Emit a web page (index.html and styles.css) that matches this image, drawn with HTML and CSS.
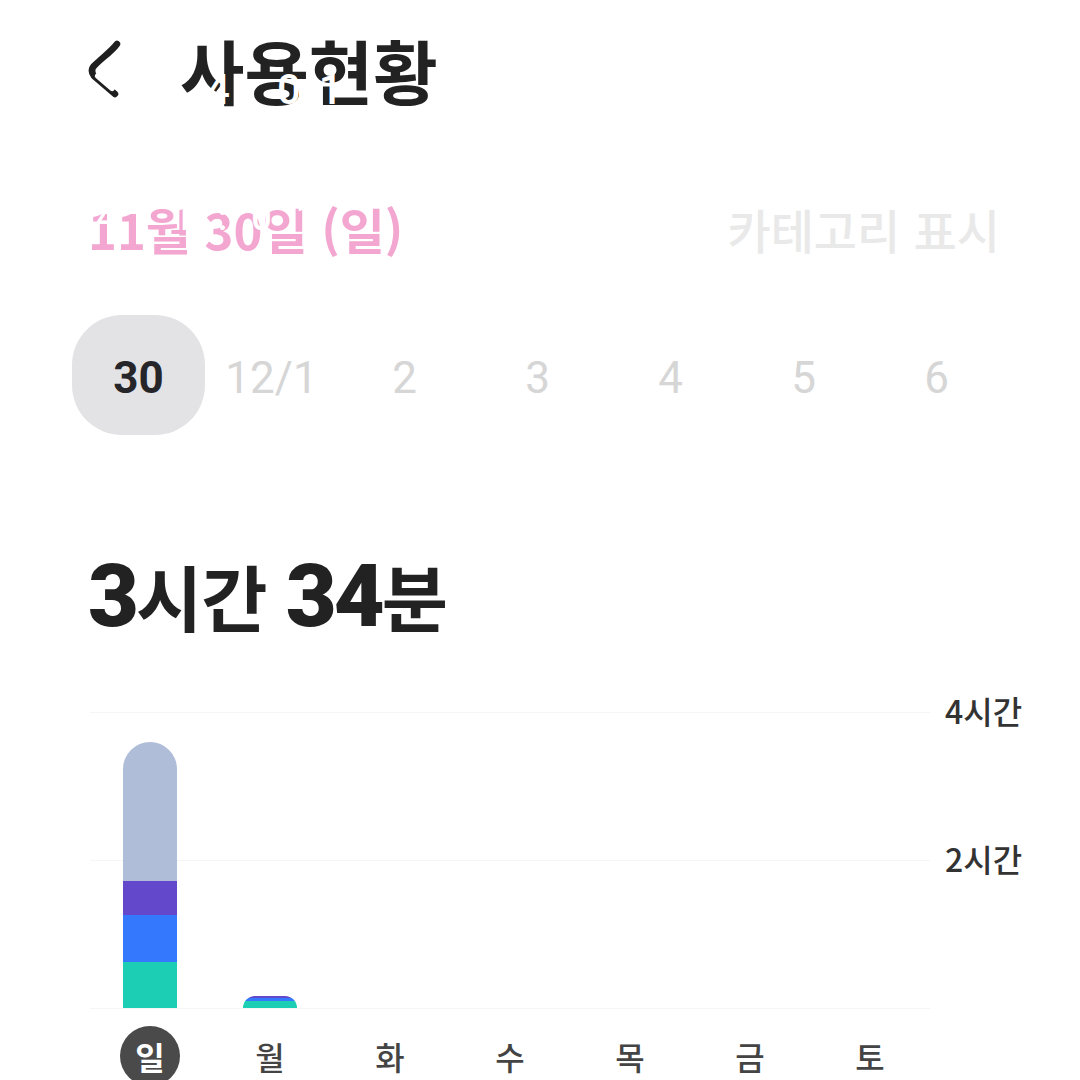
FILE: index.html
```html
<!DOCTYPE html>
<html lang="ko">
<head>
  <meta charset="UTF-8">
  <title>사용현황</title>
  <link rel="stylesheet" href="styles.css">
</head>
<body>
  <div class="screen">
    <header class="top-bar">
      <svg class="back-icon" width="40" height="64" viewBox="0 0 40 64" aria-hidden="true">
        <path d="M29 6 C24 13 14 20 8 26 C3 30 3 34 6 38 L27 56" fill="none" stroke="#1f1f1f" stroke-width="6.5" stroke-linecap="round" stroke-linejoin="round"/>
        <path d="M10 38 L24 50" fill="none" stroke="#fff" stroke-width="6" stroke-linecap="round"/>
      </svg>
      <h1>사용현황</h1>
      <span class="status-time">4:01</span>
    </header>

    <div class="date-row">
      <span class="date">11월 30일 (일)<span class="date-mask">4 1:01</span></span>
      <span class="category">카테고리 표시</span>
    </div>

    <div class="day-strip">
      <div class="day active">30</div>
      <div class="day">12/1</div>
      <div class="day">2</div>
      <div class="day">3</div>
      <div class="day">4</div>
      <div class="day">5</div>
      <div class="day">6</div>
    </div>

    <div class="total">
      <b>3</b>시간 <b>34</b>분
    </div>

    <div class="chart">
      <div class="grid-row"><div class="line"></div><span class="tick">4시간</span></div>
      <div class="grid-row"><div class="line"></div><span class="tick">2시간</span></div>
      <div class="grid-row"><div class="line"></div></div>

      <div class="bars">
        <div class="bar-slot">
          <div class="bar">
            <div class="seg seg-other" style="height:139px"></div>
            <div class="seg seg-purple" style="height:34px"></div>
            <div class="seg seg-blue" style="height:47px"></div>
            <div class="seg seg-green" style="height:46px"></div>
          </div>
        </div>
        <div class="bar-slot">
          <div class="bar bar-small">
            <div class="seg seg-purple" style="height:2px"></div>
            <div class="seg seg-blue" style="height:3px"></div>
            <div class="seg seg-green" style="height:7px"></div>
          </div>
        </div>
        <div class="bar-slot"></div>
        <div class="bar-slot"></div>
        <div class="bar-slot"></div>
        <div class="bar-slot"></div>
        <div class="bar-slot"></div>
      </div>

      <div class="weekdays">
        <div class="weekday"><span class="today">일</span></div>
        <div class="weekday">월</div>
        <div class="weekday">화</div>
        <div class="weekday">수</div>
        <div class="weekday">목</div>
        <div class="weekday">금</div>
        <div class="weekday">토</div>
      </div>
    </div>
  </div>
</body>
</html>
```

FILE: styles.css
```css
* {
  box-sizing: border-box;
}
html, body {
  margin: 0;
  height: 100%;
  overflow: hidden;
  background: #fff;
}
body {
  font-family: "Noto Sans CJK KR", "Roboto", sans-serif;
  color: #222;
}
.screen {
  height: 1080px;
  padding: 30px 0 0 88px;
  overflow: hidden;
}

/* Header */
.top-bar {
  position: relative;
  display: flex;
  align-items: center;
  height: 80px;
}
.back-icon {
  margin-left: 0;
  margin-right: 52px;
  flex: none;
}
.top-bar h1 {
  margin: 0;
  font-size: 70px;
  line-height: 80px;
  font-weight: 700;
  letter-spacing: 0;
  color: #222;
}
.status-time {
  position: absolute;
  left: 118px;
  top: 36px;
  font-family: "Roboto", sans-serif;
  font-size: 42px;
  line-height: 48px;
  font-weight: 500;
  letter-spacing: 18px;
  color: #fff;
}

/* Date row */
.date-row {
  display: flex;
  justify-content: space-between;
  align-items: center;
  margin-top: 88px;
  padding-right: 80px;
  height: 60px;
}
.date {
  position: relative;
  font-size: 49px;
  font-weight: 700;
  color: #f2a6d0;
}
.date-mask {
  position: absolute;
  left: 8px;
  top: 4px;
  font-family: "Roboto", sans-serif;
  font-size: 36px;
  font-weight: 500;
  letter-spacing: 24px;
  color: #fff;
  white-space: nowrap;
}
.category {
  font-size: 47px;
  font-weight: 500;
  color: #e9e9e9;
}

/* Day strip */
.day-strip {
  display: flex;
  margin-top: 57px;
  margin-left: -16px;
}
.day {
  width: 133px;
  height: 120px;
  padding-top: 6px;
  display: flex;
  align-items: center;
  justify-content: center;
  font-family: "Roboto", sans-serif;
  font-size: 44px;
  color: #d6d6d6;
}
.day.active {
  background: #e3e3e6;
  border-radius: 50px;
  font-weight: 700;
  color: #26262a;
}

/* Total */
.total {
  margin-top: 110px;
  height: 100px;
  font-size: 72px;
  line-height: 100px;
  font-weight: 700;
  color: #222;
  letter-spacing: -1px;
  white-space: nowrap;
}
.total b {
  font-family: "Roboto", sans-serif;
  font-size: 88px;
  letter-spacing: -3px;
}

/* Chart */
.chart {
  position: relative;
  margin-top: 67px;
  margin-left: 2px;
  width: 934px;
}
.grid-row {
  display: flex;
  align-items: flex-start;
  height: 148px;
}
.line {
  width: 840px;
  height: 1px;
  background: #f5f5f5;
  flex: none;
}
.tick {
  margin-left: 15px;
  margin-top: -22px;
  font-size: 32px;
  line-height: 40px;
  font-weight: 500;
  white-space: nowrap;
  color: #333;
}
.bars {
  position: absolute;
  left: 0;
  top: 30px;
  width: 840px;
  height: 266px;
  display: flex;
  align-items: flex-end;
}
.bar-slot {
  width: 120px;
  display: flex;
  justify-content: center;
}
.bar {
  width: 54px;
  border-radius: 27px 27px 0 0;
  overflow: hidden;
}
.bar-small {
  border-radius: 14px 14px 0 0;
}
.seg-other { background: #afbdd9; }
.seg-purple { background: #6448cc; }
.seg-blue { background: #3478fd; }
.seg-green { background: #1ccfb4; }

.weekdays {
  display: flex;
  width: 840px;
  margin-top: -130px;
}
.weekday {
  width: 120px;
  height: 60px;
  display: flex;
  align-items: center;
  justify-content: center;
  font-size: 32px;
  font-weight: 500;
  color: #444;
}
.today {
  width: 60px;
  height: 60px;
  border-radius: 50%;
  background: #4a4a4a;
  color: #fff;
  font-weight: 700;
  display: flex;
  align-items: center;
  justify-content: center;
}
```
